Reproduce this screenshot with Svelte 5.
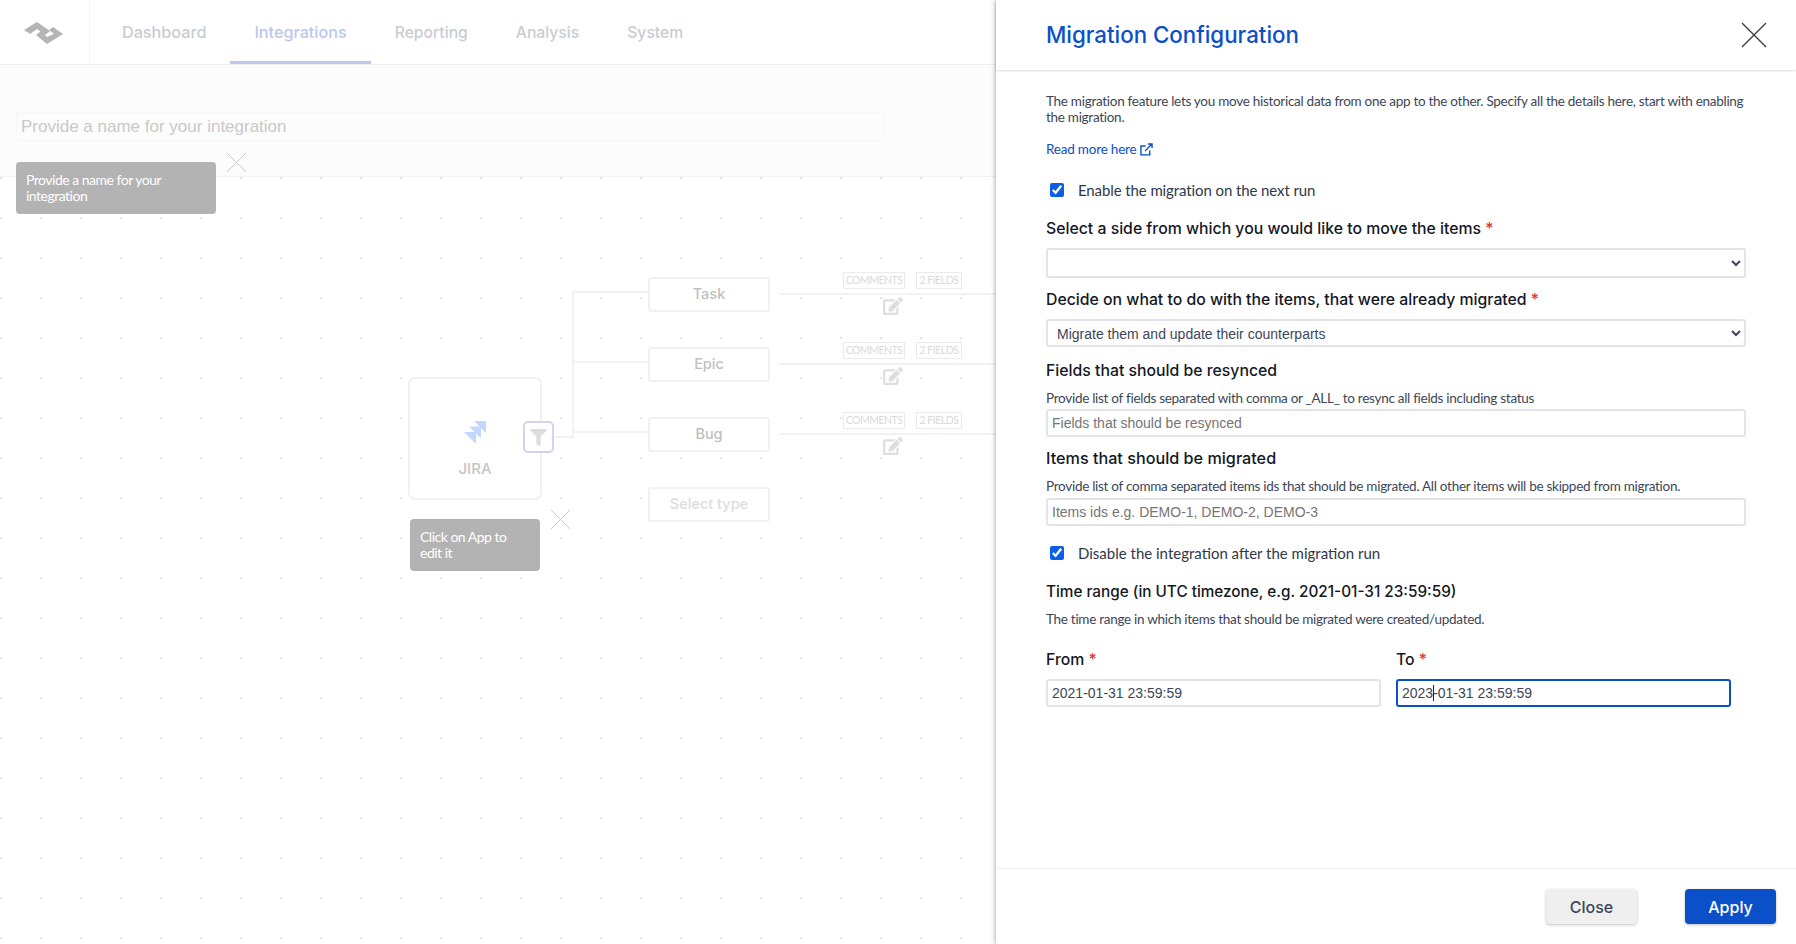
<script>
  const tabs = ['Dashboard', 'Integrations', 'Reporting', 'Analysis', 'System'];
  const issueTypes = ['Task', 'Epic', 'Bug'];
  const editPath = 'M402.6 83.2l90.2 90.2c3.8 3.8 3.8 10 0 13.8L274.4 405.6l-92.8 10.3c-12.4 1.4-22.9-9.1-21.5-21.5l10.3-92.8L388.8 83.2c3.8-3.8 10-3.8 13.8 0zm162-22.9l-48.8-48.8c-15.2-15.2-39.9-15.2-55.2 0l-35.4 35.4c-3.8 3.8-3.8 10 0 13.8l90.2 90.2c3.8 3.8 10 3.8 13.8 0l35.4-35.4c15.2-15.3 15.2-40 0-55.2zM384 346.2V448H64V128h229.8c3.2 0 6.2-1.3 8.5-3.5l40-40c7.6-7.6 2.2-20.5-8.5-20.5H48C21.5 64 0 85.5 0 112v352c0 26.5 21.5 48 48 48h352c26.5 0 48-21.5 48-48V306.2c0-10.7-12.9-16-20.5-8.5l-40 40c-2.2 2.3-3.5 5.3-3.5 8.5z';
</script>

<div class="page">
  <div class="left">
    <nav class="topbar">
      <div class="logo">
        <svg width="44" height="26" viewBox="0 0 44 26" fill="#b4b4b4">
          <path d="M3 9 L16 1 L29 10 L24 14 L16 8 L9 13 Z" />
          <path d="M15 14 L20 10 L26 16 L33 13 L28 9 L32 6 L42 13 L26 23 Z" />
        </svg>
      </div>
      <div class="tabs">
        {#each tabs as tab}
          <span class="tab" class:active={tab === 'Integrations'}>{tab}</span>
        {/each}
      </div>
    </nav>

    <div class="name-band">
      <div class="name-input">Provide a name for your integration</div>
    </div>

    <div class="canvas">
      <div class="app-card">
        <svg class="jira" width="24" height="24" viewBox="0 0 24 24" fill="#c4d7ff">
          <path d="M11 1 H23 V13 Z" />
          <path d="M6 6.5 H18 V18.5 Z" />
          <path d="M1 12 H13 V24 Z" />
        </svg>
        <span>JIRA</span>
      </div>
      <div class="filter-btn">
        <svg width="17" height="17" viewBox="0 0 512 512" fill="#dcdcdc"><path d="M487.976 0H24.028C2.71 0-8.047 25.866 7.058 40.971L192 225.941V432c0 7.831 3.821 15.17 10.237 19.662l80 55.98C298.02 518.69 320 507.493 320 487.98V225.941l184.947-184.97C520.021 25.896 509.338 0 487.976 0z" /></svg>
      </div>
      <div class="wire stub"></div>
      <div class="wire trunk"></div>

      {#each issueTypes as type, i}
        <div class="wire branch" style="top: {114 + i * 70}px"></div>
        <div class="type-box" style="top: {100 + i * 70}px">{type}</div>
        <div class="wire out" style="top: {116 + i * 70}px"></div>
        <div class="tags" style="top: {95 + i * 70}px">
          <span class="tag comments">COMMENTS</span>
          <span class="tag fields">2 FIELDS</span>
        </div>
        <svg class="edit" style="top: {120 + i * 70}px" width="20" height="18" viewBox="0 0 576 512" fill="#dedede"><path d={editPath} /></svg>
      {/each}
      <div class="type-box placeholder" style="top: 310px">Select type</div>
    </div>

    <div class="hint-tip name-tip">Provide a name for your integration</div>
    <svg class="tip-x name-x" width="21" height="21" viewBox="0 0 21 21"><path d="M1 1 L20 20 M20 1 L1 20" /></svg>
    <div class="hint-tip app-tip">Click on App to edit it</div>
    <svg class="tip-x app-x" width="21" height="21" viewBox="0 0 21 21"><path d="M1 1 L20 20 M20 1 L1 20" /></svg>
  </div>

  <aside class="panel">
    <header class="panel-head">
      <h1>Migration Configuration</h1>
      <svg width="26" height="26" viewBox="0 0 26 26" fill="none" stroke="#3a3a3a" stroke-width="1.3"><path d="M1 1 L25 25 M25 1 L1 25" /></svg>
    </header>

    <div class="panel-body">
      <p class="intro">The migration feature lets you move historical data from one app to the other. Specify all the details here, start with enabling the migration.</p>
      <a class="more" href="#more">Read more here
        <svg width="13" height="13" viewBox="0 0 14 14" fill="none" stroke="#0b50c8" stroke-width="1.5"><path d="M10.5 8 V12.8 H1 V3.2 H6 M5.5 8.5 L12.8 1.2 M8.5 1 H13 V5.5" /></svg>
      </a>

      <label class="check first"><input type="checkbox" checked /> Enable the migration on the next run</label>

      <div class="label side">Select a side from which you would like to move the items <em>*</em></div>
      <select class="ctl tall"><option></option></select>

      <div class="label decide">Decide on what to do with the items, that were already migrated <em>*</em></div>
      <select class="ctl"><option>Migrate them and update their counterparts</option></select>

      <div class="label resync">Fields that should be resynced</div>
      <p class="hint">Provide list of fields separated with comma or _ALL_ to resync all fields including status</p>
      <input class="ctl" placeholder="Fields that should be resynced" />

      <div class="label items">Items that should be migrated</div>
      <p class="hint items-hint">Provide list of comma separated items ids that should be migrated. All other items will be skipped from migration.</p>
      <input class="ctl" placeholder="Items ids e.g. DEMO-1, DEMO-2, DEMO-3" />

      <label class="check second"><input type="checkbox" checked /> Disable the integration after the migration run</label>

      <div class="label range">Time range (in UTC timezone, e.g. 2021-01-31 23:59:59)</div>
      <p class="hint">The time range in which items that should be migrated were created/updated.</p>

      <div class="dates">
        <div class="date">
          <div class="label">From <em>*</em></div>
          <input class="ctl" value="2021-01-31 23:59:59" />
        </div>
        <div class="date">
          <div class="label">To <em>*</em></div>
          <div class="focused">
            <input class="ctl on" value="2023-01-31 23:59:59" />
            <i class="caret"></i>
          </div>
        </div>
      </div>
    </div>

    <footer class="panel-foot">
      <button class="btn close">Close</button>
      <button class="btn apply">Apply</button>
    </footer>
  </aside>
</div>

<style>
  :global(body) {
    margin: 0;
    background: #fff;
    overflow: hidden;
  }
  .page {
    display: flex;
    height: 944px;
    font-family: Lato, sans-serif;
  }

  /* left side, faded behind the panel */
  .left {
    position: relative;
    flex: 1;
    display: flex;
    flex-direction: column;
    overflow: hidden;
  }
  .topbar {
    display: flex;
    height: 65px;
    flex: none;
    box-sizing: border-box;
    border-bottom: 1px solid #f0f0f0;
  }
  .logo {
    width: 90px;
    box-sizing: border-box;
    padding: 21px 0 0 21px;
    border-right: 1px solid #f4f4f4;
  }
  .tabs {
    display: flex;
    padding-left: 8px;
  }
  .tab {
    padding: 0 24px;
    height: 64px;
    box-sizing: border-box;
    font: 500 16.2px/65px Inter, sans-serif;
    color: #c9ccd3;
  }
  .tab:nth-child(n + 3) {
    font-size: 15.7px;
  }
  .tab.active {
    color: #bcc7ee;
    border-bottom: 3px solid #bcc7ee;
  }
  .name-band {
    height: 112px;
    flex: none;
    box-sizing: border-box;
    padding: 47px 112px 0 16px;
    background: #fcfcfc;
    border-bottom: 1px solid #f1f1f1;
  }
  .name-input {
    height: 29px;
    box-sizing: border-box;
    padding-left: 4px;
    border: 1px solid #f6f6f6;
    font: 17px/27px "Liberation Sans", sans-serif;
    color: #c9c9c9;
  }
  .canvas {
    position: relative;
    flex: 1;
    background-image: radial-gradient(circle at center, #e4e4e4 0.8px, transparent 1.2px);
    background-size: 40px 40px;
    background-position: 21px -19px;
  }
  .app-card {
    position: absolute;
    left: 408px;
    top: 200px;
    width: 134px;
    height: 123px;
    box-sizing: border-box;
    padding-top: 41px;
    display: flex;
    flex-direction: column;
    align-items: center;
    gap: 15px;
    background: #fff;
    border: 2px solid #f1f1f1;
    border-radius: 7px;
    font: 500 15px/20px Inter, sans-serif;
    color: #c6c6c6;
  }
  .filter-btn {
    position: absolute;
    left: 523px;
    top: 244px;
    width: 31px;
    height: 32px;
    box-sizing: border-box;
    display: flex;
    align-items: center;
    justify-content: center;
    background: #fff;
    border: 2px solid #d4d2f1;
    border-radius: 5px;
  }
  .wire {
    position: absolute;
    background: #f2f2f2;
  }
  .stub {
    left: 554px;
    top: 259px;
    width: 20px;
    height: 2px;
  }
  .trunk {
    left: 572px;
    top: 114px;
    width: 2px;
    height: 147px;
  }
  .branch {
    left: 574px;
    width: 74px;
    height: 2px;
  }
  .out {
    left: 779px;
    width: 218px;
    height: 2px;
  }
  .type-box {
    position: absolute;
    left: 648px;
    width: 122px;
    height: 35px;
    box-sizing: border-box;
    text-align: center;
    background: #fff;
    border: 2px solid #f1f1f1;
    border-radius: 3px;
    font: 500 14.5px/30px Inter, sans-serif;
    color: #bfbfbf;
  }
  .type-box.placeholder {
    color: #dddddd;
  }
  .tags {
    position: absolute;
    left: 843px;
    display: flex;
    gap: 11px;
  }
  .tag {
    height: 17px;
    box-sizing: border-box;
    text-align: center;
    border: 1px solid #ebebeb;
    font: 10.5px/15px Lato, sans-serif;
    letter-spacing: -0.5px;
    color: #dadada;
    background: #fff;
  }
  .tag.comments {
    width: 62px;
  }
  .tag.fields {
    width: 46px;
  }
  .edit {
    position: absolute;
    left: 883px;
  }
  .hint-tip {
    position: absolute;
    box-sizing: border-box;
    padding: 10px;
    background: #b3b3b3;
    border-radius: 4px;
    color: #fff;
    font: 14px/16px Lato, sans-serif;
    letter-spacing: -0.5px;
  }
  .name-tip {
    left: 16px;
    top: 162px;
    width: 200px;
    height: 52px;
  }
  .app-tip {
    left: 410px;
    top: 519px;
    width: 130px;
    height: 52px;
  }
  .tip-x {
    position: absolute;
    fill: none;
    stroke: #c9c9c9;
    stroke-width: 1;
  }
  .name-x {
    left: 226px;
    top: 152px;
  }
  .app-x {
    left: 550px;
    top: 509px;
  }

  /* right panel */
  .panel {
    width: 800px;
    flex: none;
    display: flex;
    flex-direction: column;
    background: #fff;
    box-shadow: -1px 0 4px rgba(0, 0, 0, 0.3);
    z-index: 1;
  }
  .panel-head {
    height: 70px;
    flex: none;
    box-sizing: border-box;
    display: flex;
    align-items: center;
    justify-content: space-between;
    padding: 0 29px 0 50px;
    box-shadow: 0 1px 2px rgba(0, 0, 0, 0.14);
  }
  h1 {
    margin: 0;
    font: 500 22.3px/30px Inter, sans-serif;
    color: #0b50c8;
  }
  .panel-body {
    flex: 1;
    padding: 23px 50px 0 50px;
    color: #3c4658;
  }
  .intro, .hint {
    margin: 0;
    font: 13.5px/16px Lato, sans-serif;
    letter-spacing: -0.28px;
  }
  .more {
    display: block;
    margin-top: 16px;
    font: 13.5px/16px Lato, sans-serif;
    letter-spacing: -0.2px;
    color: #0b50c8;
    text-decoration: none;
  }
  .more svg {
    vertical-align: -2px;
  }
  .check {
    display: flex;
    align-items: center;
    height: 20px;
    font: 15px/20px Lato, sans-serif;
    color: #2f3848;
  }
  .check input {
    width: 14px;
    height: 14px;
    margin: 0 14px 0 4px;
    accent-color: #0b5fe6;
  }
  .check.first {
    margin-top: 23px;
    letter-spacing: -0.1px;
  }
  .check.second {
    margin-top: 17px;
  }
  .label {
    margin-bottom: 9px;
    font: 500 15.8px/20px Inter, sans-serif;
    color: #14181f;
  }
  .label em {
    font-style: normal;
    color: #d33;
  }
  .label.side { margin-top: 19px; }
  .label.decide { margin-top: 12px; }
  .label.resync { margin-top: 14px; }
  .label.items { margin-top: 11px; font-size: 16.2px; }
  .label.range { margin-top: 19px; font-size: 15.3px; }
  .hint { margin-bottom: 3px; }
  .items-hint { margin-top: 10px; margin-bottom: 4px; }
  .ctl {
    display: block;
    width: 100%;
    height: 28px;
    box-sizing: border-box;
    padding: 0 4px;
    border: 2px solid #e3e3ea;
    border-radius: 3px;
    background-color: #fff;
    outline: none;
    font: 14px "Liberation Sans", sans-serif;
    color: #3c4658;
  }
  .ctl.tall {
    height: 30px;
  }
  select.ctl {
    padding: 2px 0 0 5px;
  }
  .ctl::placeholder {
    color: #757575;
  }
  .ctl.on {
    border-color: #0b50c8;
  }
  .dates {
    display: flex;
    margin-top: 23px;
    gap: 15px;
  }
  .date {
    width: 335px;
  }
  .focused {
    position: relative;
  }
  .caret {
    position: absolute;
    left: 37px;
    top: 6px;
    width: 1px;
    height: 16px;
    background: #222;
  }
  .panel-foot {
    height: 76px;
    flex: none;
    box-sizing: border-box;
    display: flex;
    justify-content: flex-end;
    gap: 48px;
    padding: 20px 20px 0 0;
    border-top: 1px solid #f0f0f0;
  }
  .btn {
    width: 91px;
    height: 35px;
    border: none;
    border-radius: 4px;
    font: 500 16px Inter, sans-serif;
    box-shadow: 0 1px 3px rgba(0, 0, 0, 0.25);
  }
  .close {
    background: #efefef;
    color: #3c4658;
  }
  .apply {
    background: #0b50c8;
    color: #fff;
  }
</style>
